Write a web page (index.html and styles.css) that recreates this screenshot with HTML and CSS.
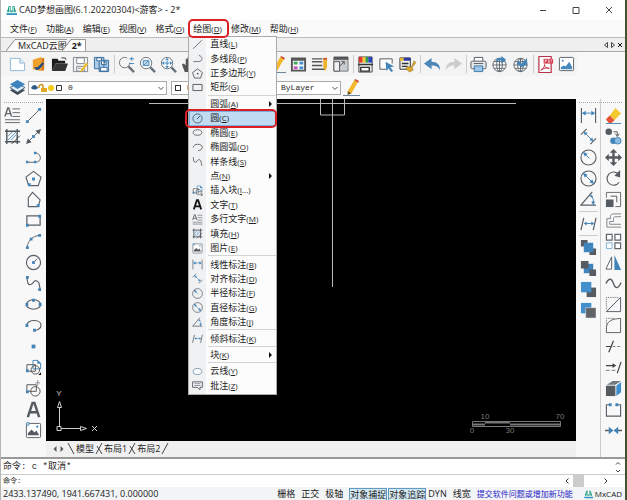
FILE: index.html
```html
<!DOCTYPE html>
<html lang="zh-CN">
<head>
<meta charset="utf-8">
<title>CAD梦想画图</title>
<link rel="stylesheet" href="styles.css">
</head>
<body>
<svg class="sprite" aria-hidden="true">
  <symbol id="logo" viewBox="0 0 12 12"><path d="M1 8 3 1h2v5h2V1h2l2 7z" fill="#16967f"/><path d="M0 9h12v2H1z" fill="#2b8fc0"/><path d="M4 2v6M8 2v6M1 8h10" stroke="#d5f3ed" fill="none"/></symbol>
  <symbol id="new" viewBox="0 0 18 18"><path d="M1.500 2.500h10l5 5v8h-15z" fill="#fcfeff" stroke="#92b6d2"/><path d="M11.500 2.500v5h5" fill="#dcebf5" stroke="#92b6d2"/></symbol>
  <symbol id="openweb" viewBox="0 0 18 18"><path d="M3 4l9-3v15l-9-2z" fill="#f0a12c"/><path d="M12 2h3v13l-3 1z" fill="#d47b12"/><path d="M4 12l3 3 3-1 5-6-2-1-5 5z" fill="#234f86"/></symbol>
  <symbol id="open" viewBox="0 0 18 18"><path d="M1 16V3h6l1 2h7v3H5z" fill="#1c1c1c"/><path d="M5 8h13l-3 8H1z" fill="#333"/><path d="M11 2h4l1 2" fill="none" stroke="#333"/></symbol>
  <symbol id="save" viewBox="0 0 18 18"><path d="M1.500 1.500h15v15h-15z" fill="#f2f2f2" stroke="#81878c"/><path d="M5 2h8v6H5zM5 11h8v5H5z" fill="#fff" stroke="#81878c"/><path d="M6 13h4" stroke="#888"/><path d="M9 15l6-8 2 2-6 7-3 1z" fill="#f0bd2a"/></symbol>
  <symbol id="saveas" viewBox="0 0 18 18"><path d="M1.500 1.500h10v12h-10zM6.500 4.500h10v12h-10z" fill="#aacbe6" stroke="#376c9d"/><path d="M4 2h5v3H4zM9 5h5v4H9zM8 12h7v4H8z" fill="#fff" stroke="#376c9d"/><path d="M12 5v3" stroke="#376c9d" stroke-width="2"/></symbol>
  <symbol id="zoomrt" viewBox="0 0 18 18"><circle cx="7" cy="7" r="5.500" fill="none" stroke="#687078" stroke-dasharray="28 7"/><path d="M11 11l6 6" stroke="#687078" stroke-width="2.500"/><path d="M12 3h5M14.500 1v4M12 8h5" stroke="#4384b8"/></symbol>
  <symbol id="zoomwin" viewBox="0 0 18 18"><circle cx="7.500" cy="7.500" r="6" fill="#f8fcff" stroke="#687078"/><path d="M12 12l5 5" stroke="#687078" stroke-width="2.500"/><path d="M4.500 5h6v5h-6zM5 10l5-5" fill="#c4def0" stroke="#4384b8"/></symbol>
  <symbol id="zoomall" viewBox="0 0 18 18"><circle cx="7.500" cy="7.500" r="6" fill="#f8fcff" stroke="#687078"/><path d="M12 12l5 5" stroke="#687078" stroke-width="2.500"/><path d="M7.500 2l2 2.500h-4zM7.500 13l2-2.500h-4zM2 7.500l2.500-2v4zM13 7.500l-2.500-2v4z" fill="#4384b8"/><path d="M5 7.500h5M7.500 5v5" stroke="#4384b8"/></symbol>
  <symbol id="hand" viewBox="0 0 18 18"><path d="M4 17L1 9l2-1 2 2V3h2v6-8h2v8l1-7h2v8l2-4 2 1-3 8-2 2z" fill="#555"/></symbol>
  <symbol id="pencil" viewBox="0 0 18 18"><path d="M5 13L12 1l4 2-7 12-4 2z" fill="#f3b72a"/><path d="M12 1l1-1 4 2-1 2z" fill="#d24a38"/><path d="M5 13l4 2-4 2z" fill="#665139"/><path d="M0 17.500h18" stroke="#607d96"/></symbol>
  <symbol id="props" viewBox="0 0 18 18"><path d="M2 2.500h14v13H2z" fill="#f8f8f8" stroke="#555" stroke-width="2"/><path d="M2 4h14" stroke="#555" stroke-width="2"/><path d="M4 6h4v3H4z" fill="#3ca95c"/><path d="M10 6h4v3h-4z" fill="#478fd0"/><path d="M4 11h4v3H4z" fill="#c052b9"/><path d="M10 11h4v3h-4z" fill="#478fd0"/></symbol>
  <symbol id="linetype" viewBox="0 0 18 18"><path d="M1 3h11M1 6h11M1 10h11M1 14h14" stroke="#555" stroke-width="1.500"/><path d="M13 2h4v10l-2 4-2-4z" fill="#eeb42b"/><path d="M13 2h4v2h-4z" fill="#d6573b"/></symbol>
  <symbol id="corner" viewBox="0 0 18 18"><path d="M2 1h15v15H2z" fill="#c9cdd1" stroke="#777"/><path d="M2 1h15v3H2z" fill="#555"/><path d="M2 6h6v10H2z" fill="#eef1f3" stroke="#555"/><path d="M8 11l5-5M10 6h3v3" fill="none" stroke="#555"/></symbol>
  <symbol id="layercolor" viewBox="0 0 18 18"><path d="M2 1h14v16H2z" fill="#eee" stroke="#444"/><path d="M2 1h4v6H2z" fill="#e13b2a"/><path d="M6 1h3v6H6z" fill="#f5c62c"/><path d="M9 1h3v6H9z" fill="#2d9c4c"/><path d="M12 1h4v6h-4z" fill="#2945bb"/><path d="M1 9h16M4 12h9v4H4z" fill="#fff" stroke="#333" stroke-width="1.500"/></symbol>
  <symbol id="select" viewBox="0 0 18 18"><path d="M10 14H2V3h13v5" fill="#fff" stroke="#555"/><path d="M8 6l9 5-4 1 3 4-2 1-3-4-2 3z" fill="#4384b8"/></symbol>
  <symbol id="match" viewBox="0 0 18 18"><path d="M1 2h11v12H1z" fill="#eee" stroke="#333"/><path d="M1 2h4v3H1z" fill="#e4bd24"/><path d="M5 2h7v3H5z" fill="#3037a8"/><path d="M3 8h7M3 11h6" stroke="#333" stroke-width="1.500"/><path d="M16 5l2 2-4 5 1 3-4 2-4-4 3-2 3 1z" fill="#dba92d" stroke="#8b671d" stroke-width=".5"/></symbol>
  <symbol id="undo" viewBox="0 0 18 18"><path d="M0 8l8-6v4c6 0 9 3 9 9-2-4-5-5-9-5v4z" fill="#4d88b9"/></symbol>
  <symbol id="redo" viewBox="0 0 18 18"><path d="M18 8l-8-6v4c-6 0-9 3-9 9 2-4 5-5 9-5v4z" fill="#cacccd"/></symbol>
  <symbol id="print" viewBox="0 0 18 18"><path d="M4.500 5V1.500h9V5" fill="#fff" stroke="#4d555c"/><rect x="1" y="5.500" width="16" height="8" rx="1.500" fill="#e8ebed" stroke="#4d555c"/><path d="M4.500 10.500h9v6h-9z" fill="#9cc5e8" stroke="#3b78aa"/><path d="M4 8h10" stroke="#555"/></symbol>
  <symbol id="globe" viewBox="0 0 18 18"><circle cx="9" cy="9.500" r="7" fill="#fff" stroke="#5d656c"/><ellipse cx="9" cy="9.500" rx="3" ry="7" fill="none" stroke="#5d656c"/><path d="M9 2.500v14M2 9.500h14M3 6h12M3 13h12" fill="none" stroke="#5d656c"/></symbol>
  <symbol id="globeup" viewBox="0 0 18 18"><use href="#globe"/><path d="M5 7c0-4 3-6 6-5V0l5 4-5 4V5c-3-1-4 0-6 2z" fill="#4384b8"/></symbol>
  <symbol id="globeok" viewBox="0 0 18 18"><use href="#globe"/><path d="M6 5l4 3 6-6v7l-6 3-5-4z" fill="#4384b8"/></symbol>
  <symbol id="pdf" viewBox="0 0 18 18"><path d="M2 .5h13v17H2z" fill="#fff" stroke="#b83349" stroke-width="1.300"/><path d="M7 3h10v5H7z" fill="#d33044"/><path d="M8.500 7V4h1.500v1.500H8.500M12 4v3h1V4zM15 7V4h1.500" fill="none" stroke="#fff" stroke-width=".6"/><path d="M4 15c3-2 4-4 4-6 0 3 2 4 5 4-3-1-6 0-9 2z" fill="none" stroke="#c62f45"/></symbol>
  <symbol id="image" viewBox="0 0 18 18"><rect x="1.500" y="1.500" width="15" height="14" rx="1" fill="#fff" stroke="#596067"/><path d="M3 14v-2l3-2 2 1 4-5 3 6v2z" fill="#4889bd"/><circle cx="5" cy="5" r="1" fill="#4384b8"/></symbol>
  <symbol id="image2" viewBox="0 0 18 18"><rect x="1.500" y="1.500" width="15" height="15" rx="1" fill="#fff" stroke="#596067"/><path d="M3 14v-2l4-4 3 3 2-2 3 5z" fill="#555b60"/><circle cx="13" cy="5" r="1.200" fill="#4384b8"/><circle cx="3" cy="2" r="1.500" fill="#d5edfb" stroke="#4384b8"/></symbol>
  <symbol id="layers" viewBox="0 0 18 18"><path d="M1 12l8 5 8-5-8-4z" fill="#3f4a55"/><path d="M1 9l8 5 8-5-8-4z" fill="#e2edf6" stroke="#48667f"/><path d="M1 5.500l8 5 8-5L9 1z" fill="#3c83bf"/></symbol>
  <symbol id="mtext" viewBox="0 0 18 18"><path d="M1 10L4 1h1l3 9M2 7h5" fill="none" stroke="#60656a" stroke-width="1.500"/><path d="M9 2h8M9 6h8M9 10h8M1 13.500h16M1 16.500h16" stroke="#60656a"/></symbol>
  <symbol id="hatch" viewBox="0 0 18 18"><path d="M3 1v16M14 1v16M1 3.500h16M1 14.500h16" stroke="#51575c" stroke-width="1.500"/><path d="M4 9l5-5M4 13l9-9M7 13l6-6" stroke="#5b91bd"/><path d="M8 17l9-9" stroke="#444"/></symbol>
  <symbol id="line" viewBox="0 0 18 18"><path d="M2 16L16 2" stroke="#596067"/><path d="M1 14h3v3H1zM14 1h3v3h-3z" fill="#4384b8"/></symbol>
  <symbol id="xline" viewBox="0 0 18 18"><path d="M3 15L15 3" stroke="#596067"/><path d="M1 17l2-6 4 4zM17 1l-6 2 4 4z" fill="#555b60"/><path d="M7.500 7.500h3v3h-3z" fill="#4384b8"/></symbol>
  <symbol id="pline" viewBox="0 0 18 18"><path d="M2 14h9c7 0 7-9 0-10" fill="none" stroke="#596067"/><path d="M1 12.500h2.500v2.500H1zM9.500 12.500H12v2.500H9.500zM9.500 3H12v2.500H9.500z" fill="#4384b8"/></symbol>
  <symbol id="polygon" viewBox="0 0 18 18"><path d="M9 1.500l8 6-3 9H4l-3-9z" fill="none" stroke="#596067" stroke-width="1.200"/><path d="M7.500 8h3v3h-3zM3 14h3v3H3z" fill="#4384b8"/></symbol>
  <symbol id="poly2" viewBox="0 0 18 18"><path d="M8 1.500l8 8-2 7H3.500V7z" fill="none" stroke="#596067" stroke-width="1.200"/><path d="M12.500 14h3v3h-3z" fill="#4384b8"/></symbol>
  <symbol id="rect" viewBox="0 0 18 18"><path d="M2 4h14v10H2z" fill="none" stroke="#596067" stroke-width="1.300"/><path d="M1 12.500h3v3H1zM14 3h3v3h-3z" fill="#4384b8"/></symbol>
  <symbol id="arc" viewBox="0 0 18 18"><path d="M2 16C3 9 7 3 16 2.500" fill="none" stroke="#596067"/><path d="M1 14h3v3H1zM5 5h3v3H5zM14 1h3v3h-3z" fill="#4384b8"/></symbol>
  <symbol id="circle" viewBox="0 0 18 18"><circle cx="9" cy="9" r="7.500" fill="none" stroke="#596067" stroke-width="1.200"/><path d="M9 9l4-4" stroke="#596067"/><path d="M7.500 7.500h3v3h-3z" fill="#4384b8"/></symbol>
  <symbol id="spline" viewBox="0 0 18 18"><path d="M2 3c1 3 0 8 4 7s3-5 6-4 3 3 4 9" fill="none" stroke="#596067" stroke-width="1.200"/><path d="M1 1h3v3H1zM14 14h3v3h-3z" fill="#4384b8"/></symbol>
  <symbol id="ellipse" viewBox="0 0 18 18"><ellipse cx="9" cy="9" rx="7.500" ry="5" fill="none" stroke="#596067" stroke-width="1.200"/><path d="M.500 7.500h3v3h-3zM14.500 7.500h3v3h-3zM7.500 3h3v3h-3z" fill="#4384b8"/></symbol>
  <symbol id="earc" viewBox="0 0 18 18"><path d="M2 9c0-7 15-7 15 0 0 3-4 5-7 5" fill="none" stroke="#596067" stroke-width="1.200"/><path d="M.500 7.500h3v3h-3zM8.500 12.500h3v3h-3z" fill="#4384b8"/></symbol>
  <symbol id="point" viewBox="0 0 18 18"><path d="M7 7h4v4H7z" fill="#4384b8"/></symbol>
  <symbol id="insert" viewBox="0 0 18 18"><path d="M8.500 1.500h5l3 3v6h-8z" fill="#fff" stroke="#4384b8"/><path d="M13 1v4h4" fill="#4384b8"/><path d="M2 6h9v7H2z" fill="none" stroke="#555"/><circle cx="11" cy="11.500" r="4.500" fill="none" stroke="#555"/><path d="M1 11h3v3H1z" fill="#4384b8"/><path d="M17 14v3h-3z" fill="#111"/></symbol>
  <symbol id="block" viewBox="0 0 18 18"><path d="M2 5h10v7H2z" fill="none" stroke="#555"/><circle cx="11" cy="12" r="5" fill="none" stroke="#555"/><path d="M1 11h3v3H1z" fill="#4384b8"/><path d="M11 3h5M13.500 0v6" stroke="#88939b"/></symbol>
  <symbol id="text" viewBox="0 0 18 18"><path d="M3 17L8 2h2l5 15M5 12h8" fill="none" stroke="#555b60" stroke-width="2.600"/></symbol>
  <symbol id="textb" viewBox="0 0 18 18"><path d="M3 17L8 2h2l5 15M5 12h8" fill="none" stroke="#151515" stroke-width="3"/></symbol>
  <symbol id="m-line" viewBox="0 0 18 18"><path d="M2 16L16 2" stroke="#555" stroke-width="1.300"/></symbol>
  <symbol id="m-pline" viewBox="0 0 18 18"><path d="M2 14h9c7 0 7-9 0-10" fill="none" stroke="#667" stroke-width="1.400"/></symbol>
  <symbol id="m-polygon" viewBox="0 0 18 18"><path d="M9 1.500l8 6-3 9H4l-3-9z" fill="none" stroke="#555" stroke-width="1.400"/><path d="M8 8h2.500v2.500H8z" fill="#555"/></symbol>
  <symbol id="m-rect" viewBox="0 0 18 18"><path d="M1.500 4h15v10h-15z" fill="none" stroke="#555" stroke-width="1.500"/></symbol>
  <symbol id="m-circle" viewBox="0 0 18 18"><circle cx="9" cy="9" r="7.500" fill="none" stroke="#455565" stroke-width="1.400"/><path d="M8 10l5-5" stroke="#455565" stroke-width="1.600"/></symbol>
  <symbol id="m-ellipse" viewBox="0 0 18 18"><ellipse cx="9" cy="9" rx="7" ry="4.500" fill="none" stroke="#555" stroke-width="1.400"/></symbol>
  <symbol id="m-earc" viewBox="0 0 18 18"><path d="M2 9c0-7 15-7 15 0 0 3-4 5-7 5" fill="none" stroke="#555" stroke-width="1.400"/></symbol>
  <symbol id="m-spline" viewBox="0 0 18 18"><path d="M2 2c1 4 0 9 4 8s3-5 6-4 3 4 4 10" fill="none" stroke="#555" stroke-width="1.400"/></symbol>
  <symbol id="dimlin" viewBox="0 0 18 18"><path d="M1.500 1v16M16.500 1v16" stroke="#596067" stroke-width="1.200"/><path d="M3 6.500h12" stroke="#4384b8"/><path d="M2 6.500l4-2.500v5zM16 6.500L12 4v5z" fill="#4384b8"/></symbol>
  <symbol id="dimali" viewBox="0 0 18 18"><path d="M1 7l6-6M11 17l6-6" stroke="#596067" stroke-width="1.200"/><path d="M5 5l8 8" stroke="#4384b8"/><path d="M4 4l4 1-3 3zM14 14l-4-1 3-3z" fill="#4384b8"/></symbol>
  <symbol id="dimrad" viewBox="0 0 18 18"><circle cx="9" cy="9" r="8" fill="none" stroke="#596067" stroke-width="1.200"/><path d="M4 4l6 6" stroke="#4384b8"/><path d="M3 3l5 2-3 3z" fill="#4384b8"/></symbol>
  <symbol id="dimdia" viewBox="0 0 18 18"><circle cx="9" cy="9" r="8" fill="none" stroke="#596067" stroke-width="1.200"/><path d="M4 4l10 10" stroke="#4384b8"/><path d="M3 3l5 2-3 3zM15 15l-5-2 3-3z" fill="#4384b8"/></symbol>
  <symbol id="dimang" viewBox="0 0 18 18"><path d="M13 1L1 15h16" fill="none" stroke="#596067" stroke-width="1.300"/><path d="M12 5c2 3 3 6 2 9" fill="none" stroke="#4384b8"/><path d="M11 3l3 3-3 1zM14 15l-2-4h4z" fill="#4384b8"/></symbol>
  <symbol id="dimobl" viewBox="0 0 18 18"><path d="M1 16L4 3M14 16l3-13" stroke="#596067" stroke-width="1.300"/><path d="M5 9h9" stroke="#4384b8"/><path d="M4 9l3-2v4zM15 9l-3-2v4z" fill="#4384b8"/></symbol>
  <symbol id="front" viewBox="0 0 18 18"><path d="M1 1h7v7H1zM10 10h7v7h-7z" fill="#555b60"/><path d="M4 4h10v10H4z" fill="#3e84bd"/></symbol>
  <symbol id="back" viewBox="0 0 18 18"><path d="M4 4h10v10H4z" fill="#3e84bd"/><path d="M1 1h8v8H1zM10 10h7v7h-7z" fill="#555b60"/></symbol>
  <symbol id="above" viewBox="0 0 18 18"><path d="M7 7h10v10H7z" fill="#555b60"/><path d="M1 1h11v11H1z" fill="#4190cc"/></symbol>
  <symbol id="below" viewBox="0 0 18 18"><path d="M1 1h11v11H1z" fill="#4190cc"/><path d="M6 6h11v11H6z" fill="#606468" stroke="#fff" stroke-width=".5"/></symbol>
  <symbol id="erase" viewBox="0 0 18 18"><path d="M5 9l6-8 6 6-7 7z" fill="#f4c92d"/><path d="M1 13l4-4 5 5-3 3H4z" fill="#e65237"/><path d="M1 17.500h16" stroke="#4384b8"/></symbol>
  <symbol id="copy" viewBox="0 0 18 18"><circle cx="4" cy="4" r="3.500" fill="#555b60"/><circle cx="9" cy="13.500" r="3.500" fill="#4384b8"/><circle cx="13.500" cy="13.500" r="3.500" fill="#8dbce0" stroke="#4384b8"/><path d="M9 4h4v4M11 6l2 3 2-3" fill="none" stroke="#555"/></symbol>
  <symbol id="move" viewBox="0 0 18 18"><path d="M9 0l4 4H5zM9 18l4-4H5zM0 9l4-4v8zM18 9l-4-4v8z" fill="#555b60"/><path d="M9 3v12M3 9h12" stroke="#555b60" stroke-width="2.500"/></symbol>
  <symbol id="rotate" viewBox="0 0 18 18"><path d="M14 4a7 7 0 1 0 1 9" fill="none" stroke="#555b60" stroke-width="1.200"/><path d="M10 6l6-6v8z" fill="#555b60"/></symbol>
  <symbol id="scale" viewBox="0 0 18 18"><path d="M1 9h8v8H1z" fill="#555b60"/><path d="M1.500 7V1.500h15v15H11" fill="none" stroke="#666"/><path d="M6 5.500h6.500V12" fill="none" stroke="#555"/></symbol>
  <symbol id="offset" viewBox="0 0 18 18"><path d="M17 2H9C6 2 5 4 6 7H2v9h15M17 5h-6c-2 0-2 1-2 5H5v3h12" fill="none" stroke="#7c8387"/></symbol>
  <symbol id="array" viewBox="0 0 18 18"><path d="M1.500 1.500h6v6h-6zM10.500 1.500h6v6h-6zM10.500 10.500h6v6h-6z" fill="#fff" stroke="#61676c" stroke-width="1.300"/><path d="M1.500 10.500h6v6h-6z" fill="#fff" stroke="#7aaed6"/></symbol>
  <symbol id="mirror" viewBox="0 0 18 18"><path d="M7 3v13H1z" fill="#fff" stroke="#596067"/><path d="M10 1l7 16h-7z" fill="#4384b8"/></symbol>
  <symbol id="curve" viewBox="0 0 18 18"><path d="M1 9c3-6 6-6 8 0s5 6 8-1" fill="none" stroke="#555b60" stroke-width="1.400"/></symbol>
  <symbol id="chamfer" viewBox="0 0 18 18"><path d="M1.500 16.500h15v-15zl15-15" fill="none" stroke="#596067"/><path d="M1.500 14V1.500H14" fill="none" stroke="#596067" stroke-dasharray="1 1"/></symbol>
  <symbol id="fillet" viewBox="0 0 18 18"><path d="M1.500 16.500v-5C2 5 6 2 16.500 1.500v15z" fill="none" stroke="#596067"/><path d="M1.500 10V1.500H10" fill="none" stroke="#596067" stroke-dasharray="1 1"/></symbol>
  <symbol id="break" viewBox="0 0 18 18"><path d="M1 9h5M4 15L9 3" stroke="#444" stroke-width="1.300"/><path d="M8 9h9" stroke="#777" stroke-dasharray="3 2"/></symbol>
  <symbol id="extend" viewBox="0 0 18 18"><path d="M1 7h8M13 15l4-12" stroke="#444" stroke-width="1.300"/><path d="M8 4.500l4 2.500-4 2.500z" fill="#444"/><path d="M1 12h11" stroke="#777" stroke-dasharray="4 2"/></symbol>
  <symbol id="cube" viewBox="0 0 18 18"><path d="M1 6h10v11H1z" fill="#555b60"/><path d="M2 5l6-4h9l-6 4z" fill="#74797d"/><path d="M12 6l5-4v11l-5 4z" fill="#3f8fcf"/></symbol>
  <symbol id="join" viewBox="0 0 18 18"><path d="M6 4H1.500v12h15V4H12" fill="none" stroke="#596067" stroke-width="1.200"/><path d="M4 2.500h3v3H4zM11 2.500h3v3h-3z" fill="#4384b8"/></symbol>
  <symbol id="merge" viewBox="0 0 18 18"><path d="M0 9h5M13 9h5" stroke="#555b60" stroke-width="1.400"/><path d="M4 5l5 4-5 4zM14 5l-5 4 5 4z" fill="#4384b8"/></symbol>
  <symbol id="cloud" viewBox="0 0 18 18"><ellipse cx="9" cy="9" rx="7" ry="5" fill="#f8fcff" stroke="#7895ad" stroke-width="1.500"/></symbol>
  <symbol id="note" viewBox="0 0 18 18"><path d="M1 3h16v9h-4v4l-4-4H1z" fill="#f4f6f8" stroke="#545c65" stroke-width="1.500"/><path d="M4 6h10M4 9h10" stroke="#545c65"/></symbol>
  <symbol id="down" viewBox="0 0 8 8"><path d="M1.500 3L4 5.500 6.500 3" fill="none" stroke="#555"/></symbol>
  <symbol id="slash" viewBox="0 0 10 12"><path d="M0 12L9 .5h1V12" fill="#fafafa"/><path d="M0 12L9 .5h1" fill="none" stroke="#888"/></symbol>
</svg>

<header class="titlebar">
  <svg class="logo"><use href="#logo"/></svg>
  <h1>CAD梦想画图(6.1.20220304)&lt;游客&gt; - 2*</h1>
  <div class="winbuttons">
    <button aria-label="最小化"><svg viewBox="0 0 8 8"><path d="M1 4.500h6"/></svg></button>
    <button aria-label="最大化"><svg viewBox="0 0 8 8"><path d="M1 1.500h6v6H1z"/></svg></button>
    <button aria-label="关闭"><svg viewBox="0 0 8 8"><path d="M1 1l6 6M7 1L1 7"/></svg></button>
  </div>
</header>

<nav class="menubar">
  <button>文件<small>(<u>F</u>)</small></button>
  <button>功能<small>(<u>A</u>)</small></button>
  <button>编辑<small>(<u>E</u>)</small></button>
  <button>视图<small>(<u>V</u>)</small></button>
  <button>格式<small>(<u>O</u>)</small></button>
  <div class="menuhost">
    <button class="marked" aria-expanded="true">绘图<small>(<u>D</u>)</small></button>
    <ul class="dropdown">
      <li><button><svg><use href="#m-line"/></svg>直线<small>(<u>L</u>)</small></button></li>
      <li><button><svg><use href="#m-pline"/></svg>多线段<small>(<u>P</u>)</small></button></li>
      <li><button><svg><use href="#m-polygon"/></svg>正多边形<small>(<u>Y</u>)</small></button></li>
      <li><button><svg><use href="#m-rect"/></svg>矩形<small>(<u>G</u>)</small></button></li>
      <li class="rule"></li>
      <li><button class="sub"><svg></svg>圆弧<small>(<u>A</u>)</small></button></li>
      <li><button class="marked current"><svg><use href="#m-circle"/></svg>圆<small>(<u>C</u>)</small></button></li>
      <li><button><svg><use href="#m-ellipse"/></svg>椭圆<small>(<u>E</u>)</small></button></li>
      <li><button><svg><use href="#m-earc"/></svg>椭圆弧<small>(<u>O</u>)</small></button></li>
      <li><button><svg><use href="#m-spline"/></svg>样条线<small>(<u>S</u>)</small></button></li>
      <li><button class="sub"><svg></svg>点<small>(<u>N</u>)</small></button></li>
      <li><button><svg><use href="#insert"/></svg>插入块<small>(<u>I</u>...)</small></button></li>
      <li><button><svg><use href="#textb"/></svg>文字<small>(<u>T</u>)</small></button></li>
      <li><button><svg><use href="#mtext"/></svg>多行文字<small>(<u>M</u>)</small></button></li>
      <li><button><svg><use href="#hatch"/></svg>填充<small>(<u>H</u>)</small></button></li>
      <li><button><svg><use href="#image2"/></svg>图片<small>(<u>E</u>)</small></button></li>
      <li class="rule"></li>
      <li><button><svg><use href="#dimlin"/></svg>线性标注<small>(<u>B</u>)</small></button></li>
      <li><button><svg><use href="#dimali"/></svg>对齐标注<small>(<u>D</u>)</small></button></li>
      <li><button><svg><use href="#dimrad"/></svg>半径标注<small>(<u>F</u>)</small></button></li>
      <li><button><svg><use href="#dimdia"/></svg>直径标注<small>(<u>G</u>)</small></button></li>
      <li><button><svg><use href="#dimang"/></svg>角度标注<small>(<u>J</u>)</small></button></li>
      <li class="rule"></li>
      <li><button><svg><use href="#dimobl"/></svg>倾斜标注<small>(<u>K</u>)</small></button></li>
      <li class="rule"></li>
      <li><button class="sub"><svg></svg>块<small>(<u>K</u>)</small></button></li>
      <li class="rule"></li>
      <li><button><svg><use href="#cloud"/></svg>云线<small>(<u>Y</u>)</small></button></li>
      <li><button><svg><use href="#note"/></svg>批注<small>(<u>Z</u>)</small></button></li>
    </ul>
  </div>
  <button>修改<small>(<u>M</u>)</small></button>
  <button>帮助<small>(<u>H</u>)</small></button>
</nav>

<div class="doctabs">
  <svg class="slant"><use href="#slash"/></svg><button>MxCAD云图</button>
  <svg class="slant over"><use href="#slash"/></svg><button class="active">2*</button>
  <div class="tabnav">
    <button aria-label="上一个"><svg viewBox="0 0 6 8"><path d="M4.500 1.500v5L1.500 4z"/></svg></button>
    <button aria-label="下一个"><svg viewBox="0 0 6 8"><path d="M1.500 1.500v5l3-2.500z"/></svg></button>
    <button aria-label="关闭标签"><svg class="x" viewBox="0 0 6 8"><path d="M1 2l4 4M5 2L1 6"/></svg></button>
  </div>
</div>

<div class="toolbar main">
  <button aria-label="新建"><svg><use href="#new"/></svg></button>
  <button aria-label="打开云图"><svg><use href="#openweb"/></svg></button>
  <button aria-label="打开"><svg><use href="#open"/></svg></button>
  <button aria-label="保存"><svg><use href="#save"/></svg></button>
  <button aria-label="另存为"><svg><use href="#saveas"/></svg></button>
  <i></i>
  <button aria-label="实时缩放"><svg><use href="#zoomrt"/></svg></button>
  <button aria-label="窗口缩放"><svg><use href="#zoomwin"/></svg></button>
  <button aria-label="范围缩放"><svg><use href="#zoomall"/></svg></button>
  <button aria-label="平移"><svg><use href="#hand"/></svg></button>
  <i></i>
  <button aria-label="圆"><svg><use href="#circle"/></svg></button>
  <button aria-label="矩形"><svg><use href="#rect"/></svg></button>
  <button aria-label="图片"><svg><use href="#image2"/></svg></button>
  <button aria-label="画笔"><svg><use href="#pencil"/></svg></button>
  <button aria-label="特性"><svg><use href="#props"/></svg></button>
  <button aria-label="线型"><svg><use href="#linetype"/></svg></button>
  <button aria-label="视口"><svg><use href="#corner"/></svg></button>
  <i></i>
  <button aria-label="颜色"><svg><use href="#layercolor"/></svg></button>
  <button aria-label="选择"><svg><use href="#select"/></svg></button>
  <button aria-label="特性匹配"><svg><use href="#match"/></svg></button>
  <i></i>
  <button aria-label="撤销"><svg><use href="#undo"/></svg></button>
  <button aria-label="重做"><svg><use href="#redo"/></svg></button>
  <i></i>
  <button aria-label="打印"><svg><use href="#print"/></svg></button>
  <button aria-label="上传"><svg><use href="#globeup"/></svg></button>
  <button aria-label="发布"><svg><use href="#globeok"/></svg></button>
  <i></i>
  <button aria-label="输出PDF"><svg><use href="#pdf"/></svg></button>
  <button aria-label="输出图片"><svg><use href="#image"/></svg></button>
</div>

<div class="toolbar format">
  <button aria-label="图层"><svg><use href="#layers"/></svg></button>
  <label class="combo layer">
    <svg class="state" viewBox="0 0 32 10"><path d="M1 5c2-4 5-4 7 0-2 2-5 2-7 0z" fill="#2f5c88"/><path d="M9 5V3c1-2 4-2 4 0v3" fill="none" stroke="#c8931e" stroke-width="1.500"/><path d="M11 5h6v4h-6z" fill="#e3a823"/><circle cx="21" cy="5" r="3" fill="#f2ca17"/><path d="M26.500 2.500h5v5h-5z" fill="#fff" stroke="#333"/></svg>
    <select aria-label="当前图层"><option>0</option></select><svg class="arrow"><use href="#down"/></svg>
  </label>
  <label class="combo color"><span class="swatch"></span><select aria-label="颜色"><option>ByLayer</option></select><svg class="arrow"><use href="#down"/></svg></label>
  <label class="combo ltype"><select aria-label="线型"><option>ByLayer</option></select><svg class="arrow"><use href="#down"/></svg></label>
  <button aria-label="编辑线型"><svg><use href="#pencil"/></svg></button>
</div>

<main class="workspace">
  <aside class="tools draw">
    <div class="toolcol">
      <button aria-label="多行文字"><svg><use href="#mtext"/></svg></button>
      <button aria-label="填充"><svg><use href="#hatch"/></svg></button>
    </div>
    <div class="toolcol">
      <button aria-label="直线"><svg><use href="#line"/></svg></button>
      <button aria-label="构造线"><svg><use href="#xline"/></svg></button>
      <button aria-label="多线段"><svg><use href="#pline"/></svg></button>
      <button aria-label="正多边形"><svg><use href="#polygon"/></svg></button>
      <button aria-label="多边形"><svg><use href="#poly2"/></svg></button>
      <button aria-label="矩形"><svg><use href="#rect"/></svg></button>
      <button aria-label="圆弧"><svg><use href="#arc"/></svg></button>
      <button aria-label="圆"><svg><use href="#circle"/></svg></button>
      <button aria-label="样条线"><svg><use href="#spline"/></svg></button>
      <button aria-label="椭圆"><svg><use href="#ellipse"/></svg></button>
      <button aria-label="椭圆弧"><svg><use href="#earc"/></svg></button>
      <button aria-label="点"><svg><use href="#point"/></svg></button>
      <button aria-label="插入块"><svg><use href="#insert"/></svg></button>
      <button aria-label="创建块"><svg><use href="#block"/></svg></button>
      <button aria-label="文字"><svg><use href="#text"/></svg></button>
      <button aria-label="图片"><svg><use href="#image2"/></svg></button>
    </div>
  </aside>

  <section class="sheet">
    <svg class="canvas" viewBox="46 99 530 342">
      <g fill="none" stroke="#b9b9b9"><path d="M149 103.500h367M332.500 99v188M320.500 99v16h24V99"/></g>
      <g fill="none" stroke="#d0d0d0"><path d="M57 426.500h4v4h-4zM59.500 426v-19M61 428.500h20M57.500 407.500l2-6 2 6zM80.500 426.500l6 2-6 2zM92 426l5 5M97 426l-5 5"/></g>
      <g fill="none" stroke="#777"><path d="M472.500 421.500h88v5h-88z"/><path d="M473 424.500h12M485 422.500h25M510 424.500h50" stroke-width="2"/></g>
      <g class="axis"><text x="59" y="396">Y</text></g>
      <g class="ruler"><text x="485" y="419">10</text><text x="560" y="419">70</text><text x="472" y="433">0</text><text x="510" y="433">30</text></g>
    </svg>
    <div class="layouts">
      <button aria-label="向左"><svg viewBox="0 0 6 8"><path d="M5 1v6L2 4z"/></svg></button>
      <button aria-label="向右"><svg viewBox="0 0 6 8"><path d="M1 1v6l3-3z"/></svg></button>
      <svg class="edge" viewBox="0 0 8 12"><path d="M1 0l6 11"/></svg>
      <button>模型</button>
      <svg class="edge" viewBox="0 0 8 12"><path d="M7 0L1 11M2 3l5 8"/></svg>
      <button>布局1</button>
      <svg class="edge" viewBox="0 0 8 12"><path d="M7 0L1 11M2 3l5 8"/></svg>
      <button>布局2</button>
      <svg class="edge" viewBox="0 0 8 12"><path d="M7 0L1 11"/></svg>
    </div>
  </section>

  <aside class="tools modify">
    <div class="toolcol">
      <button aria-label="线性标注"><svg><use href="#dimlin"/></svg></button>
      <button aria-label="对齐标注"><svg><use href="#dimali"/></svg></button>
      <button aria-label="半径标注"><svg><use href="#dimrad"/></svg></button>
      <button aria-label="直径标注"><svg><use href="#dimdia"/></svg></button>
      <button aria-label="角度标注"><svg><use href="#dimang"/></svg></button>
      <i></i>
      <button aria-label="倾斜标注"><svg><use href="#dimobl"/></svg></button>
      <i></i>
      <button aria-label="前置"><svg><use href="#front"/></svg></button>
      <button aria-label="后置"><svg><use href="#back"/></svg></button>
      <button aria-label="置于对象之上"><svg><use href="#above"/></svg></button>
      <button aria-label="置于对象之下"><svg><use href="#below"/></svg></button>
    </div>
    <div class="toolcol outer">
      <button aria-label="删除"><svg><use href="#erase"/></svg></button>
      <button aria-label="复制"><svg><use href="#copy"/></svg></button>
      <button aria-label="移动"><svg><use href="#move"/></svg></button>
      <button aria-label="旋转"><svg><use href="#rotate"/></svg></button>
      <button aria-label="缩放"><svg><use href="#scale"/></svg></button>
      <button aria-label="偏移"><svg><use href="#offset"/></svg></button>
      <button aria-label="阵列"><svg><use href="#array"/></svg></button>
      <button aria-label="镜像"><svg><use href="#mirror"/></svg></button>
      <button aria-label="曲线编辑"><svg><use href="#curve"/></svg></button>
      <button aria-label="倒角"><svg><use href="#chamfer"/></svg></button>
      <button aria-label="圆角"><svg><use href="#fillet"/></svg></button>
      <button aria-label="修剪"><svg><use href="#break"/></svg></button>
      <button aria-label="延伸"><svg><use href="#extend"/></svg></button>
      <button aria-label="分解"><svg><use href="#cube"/></svg></button>
      <button aria-label="打断"><svg><use href="#join"/></svg></button>
      <button aria-label="合并"><svg><use href="#merge"/></svg></button>
    </div>
  </aside>
</main>

<section class="console">
  <div class="history"><output>命令: c *取消*</output><svg viewBox="0 0 8 12"><path d="M2 3.500l2-2 2 2M2 9l2 2 2-2"/></svg></div>
  <div class="prompt"><label for="cmd">命令:</label><input id="cmd" type="text">
    <div class="hscroll"><svg viewBox="0 0 6 8"><path d="M4.500 1.500L2 4l2.500 2.500"/></svg><span></span><svg viewBox="0 0 6 8"><path d="M1.500 1.500L4 4 1.500 6.500"/></svg></div>
  </div>
</section>

<footer class="status">
  <output class="coords">2433.137490, 1941.667431, 0.000000</output>
  <button>栅格</button><button>正交</button><button>极轴</button>
  <button class="on">对象捕捉</button><button class="on">对象追踪</button>
  <button class="dyn">DYN</button><button>线宽</button>
  <a href="#">提交软件问题或增加新功能</a>
  <span class="brand"><svg class="logo"><use href="#logo"/></svg>MxCAD</span>
</footer>
</body>
</html>
```
FILE: styles.css
```css
* { box-sizing: border-box; }

body {
  margin: 0;
  min-height: 100vh;
  display: flex;
  flex-direction: column;
  background: #f8f8f8;
  border-left: 1px solid #b5b5b5;
  border-right: 2px solid #45512f;
  color: #222;
  font: 9px/12px "Open Sans", "Noto Sans CJK SC", sans-serif;
  overflow: hidden;
}

button, select, input {
  font: inherit;
  color: inherit;
  margin: 0;
  padding: 0;
  border: 0;
  background: none;
  white-space: nowrap;
}

svg { display: block; flex: none; }
small { font-size: 8px; }
.sprite { position: absolute; width: 0; height: 0; }
.logo { width: 11px; height: 11px; }

/* Title bar */
.titlebar {
  display: flex;
  align-items: center;
  height: 20px;
  padding-left: 5px;
  gap: 2px;
  background: #fff;
}
h1 { margin: 0; font-size: 9px; font-weight: 400; }
.winbuttons { display: flex; margin-left: auto; }
.winbuttons button { width: 33px; display: flex; justify-content: center; }
.winbuttons svg { width: 8px; height: 8px; fill: none; stroke: #444; }

/* Menu bar */
.menubar {
  display: flex;
  align-items: center;
  height: 17px;
  padding-left: 9px;
  gap: 9px;
  background: #fafafa;
}
.menubar > button, .menuhost > button { line-height: 15px; }
.menuhost { position: relative; }
.marked { position: relative; }
.marked::after {
  content: "";
  position: absolute;
  z-index: 3;
  inset: -2px -7px -2px -5px;
  border: 2px solid #dc1f24;
  border-radius: 5px;
}
.dropdown {
  position: absolute;
  z-index: 2;
  top: 15px;
  left: -5px;
  width: 89px;
  height: 359px;
  margin: 0;
  padding: 0 0 1px;
  display: flex;
  flex-direction: column;
  list-style: none;
  border: 1px solid #aaa;
  background: linear-gradient(to right, #f0f1f3 17px, #fcfcfc 17px);
}
.dropdown li { flex: 1; display: flex; }
.dropdown .rule { flex: none; height: 2px; margin-left: 19px; border-top: 1px solid #d4d4d4; }
.dropdown button { flex: 1; display: flex; align-items: center; }
.dropdown svg { width: 11px; height: 11px; margin: 0 7px 0 3px; }
.dropdown .sub::after {
  content: "";
  margin: 0 4px 0 auto;
  border: 3px solid transparent;
  border-left-color: #111;
  border-right: 0;
}
.dropdown .current { background: #bfdcf3; box-shadow: inset 0 0 0 1px #79addb; }
.dropdown .current::after { inset: -2px -1px -2px -4px; }

/* Document tabs */
.doctabs {
  display: flex;
  align-items: flex-end;
  height: 15px;
  padding-left: 5px;
  background: #efefef;
  border-top: 1px solid #bcbcbc;
  border-bottom: 1px solid #a9a9a9;
}
.doctabs > button { height: 12px; line-height: 12px; background: #fafafa; border-top: 1px solid #999; padding-left: 2px; }
.doctabs .active { font-weight: 700; background: #fff; border-right: 1px solid #999; padding: 0 3px 0 0; }
.slant { width: 10px; height: 12px; }
.slant.over { margin-left: -5px; }
.tabnav { display: flex; align-self: center; gap: 1px; margin-left: auto; padding-right: 2px; }
.tabnav svg { width: 6px; height: 8px; fill: none; stroke: #444; }
.tabnav .x { stroke: #111; }

/* Toolbars */
.toolbar { display: flex; align-items: center; padding-left: 6px; }
.toolbar button, .toolcol button { width: 21px; height: 21px; display: flex; align-items: center; justify-content: center; }
.toolbar button svg, .toolcol svg { width: 17px; height: 17px; }
.toolbar i { width: 1px; height: 18px; margin: 0 1px 0 2px; background: #ccc; }
.main { height: 24px; align-self: flex-start; background: #f4f4f4; }
.format { height: 23px; }
.combo { display: flex; align-items: center; height: 14px; border: 1px solid #aaa; background: #fff; }
.combo select { flex: 1; min-width: 0; appearance: none; font: 8px/12px "Liberation Mono", monospace; }
.arrow { width: 8px; height: 8px; margin-right: 1px; }
.layer { width: 139px; }
.state { width: 32px; height: 10px; margin: 0 6px 0 1px; }
.color { width: 92px; margin-left: 4px; }
.swatch { width: 6px; height: 6px; margin: 0 6px 0 3px; border: 1px solid #333; }
.ltype { width: 76px; margin-left: 2px; }
.ltype select { padding-left: 15px; }

/* Workspace */
.workspace { flex: 1; display: flex; align-items: stretch; min-height: 0; }
.tools { position: relative; display: flex; }
.tools::before { content: ""; position: absolute; top: 3px; left: 3px; right: 3px; border-top: 1px dotted #aaa; }
.toolcol { display: flex; flex-direction: column; padding-top: 6px; }
.toolcol i { height: 1px; margin: 1px; background: #ccc; }
.draw { width: 45px; padding-left: 1px; }
.modify { padding-left: 1px; background: #f8f8f8; }
.modify .toolcol { padding-left: 1px; padding-right: 1px; }
.modify .outer { padding-left: 2px; border-left: 1px solid #ccc; }
.sheet { flex: 1; display: flex; flex-direction: column; min-width: 0; background: #000; }
.canvas { flex: 1; width: 100%; min-height: 0; }
.canvas text { text-anchor: middle; font: 8px "Liberation Sans", sans-serif; }
.axis { fill: #ccc; }
.ruler { fill: #777; }
.layouts { display: flex; align-items: center; height: 16px; padding-left: 5px; gap: 1px; background: #f0f0f0; }
.layouts svg { width: 7px; height: 8px; fill: #555; }
.layouts .edge { width: 8px; height: 12px; fill: none; stroke: #444; }

/* Command line */
.console { background: #fff; border-top: 2px solid #999; }
.history, .prompt { display: flex; align-items: center; padding-left: 2px; }
.history { height: 16px; border-bottom: 1px solid #ccc; font-family: "Liberation Mono", "Noto Sans CJK SC", monospace; }
.history svg { width: 8px; height: 12px; margin: 0 3px 0 auto; fill: none; stroke: #444; }
.prompt { height: 12px; font: 7px/10px "Liberation Mono", "Noto Sans CJK SC", monospace; }
.prompt input { flex: 1; min-width: 0; outline: 0; }
.hscroll { display: flex; align-items: center; align-self: stretch; padding-right: 16px; gap: 3px; }
.hscroll svg { width: 6px; height: 8px; fill: none; stroke: #333; }
.hscroll span { width: 11px; height: 100%; margin-right: 16px; background: #ccc; }

/* Status bar */
.status { display: flex; align-items: center; height: 14px; padding: 0 3px 0 2px; gap: 6px; background: #f3f4f5; }
.coords { margin-right: auto; }
.status .on { height: 13px; border: 1px solid #5f9bc0; background: #d4e8f4; line-height: 11px; }
.status .on + .on { margin-left: -5px; }
.status .dyn { margin-left: -4px; }
.status a { font-size: 8px; color: #2824c8; text-decoration: none; }
.brand { display: flex; align-items: center; gap: 2px; margin-left: 5px; font-size: 8px; }
.brand .logo { width: 9px; height: 9px; }
```
